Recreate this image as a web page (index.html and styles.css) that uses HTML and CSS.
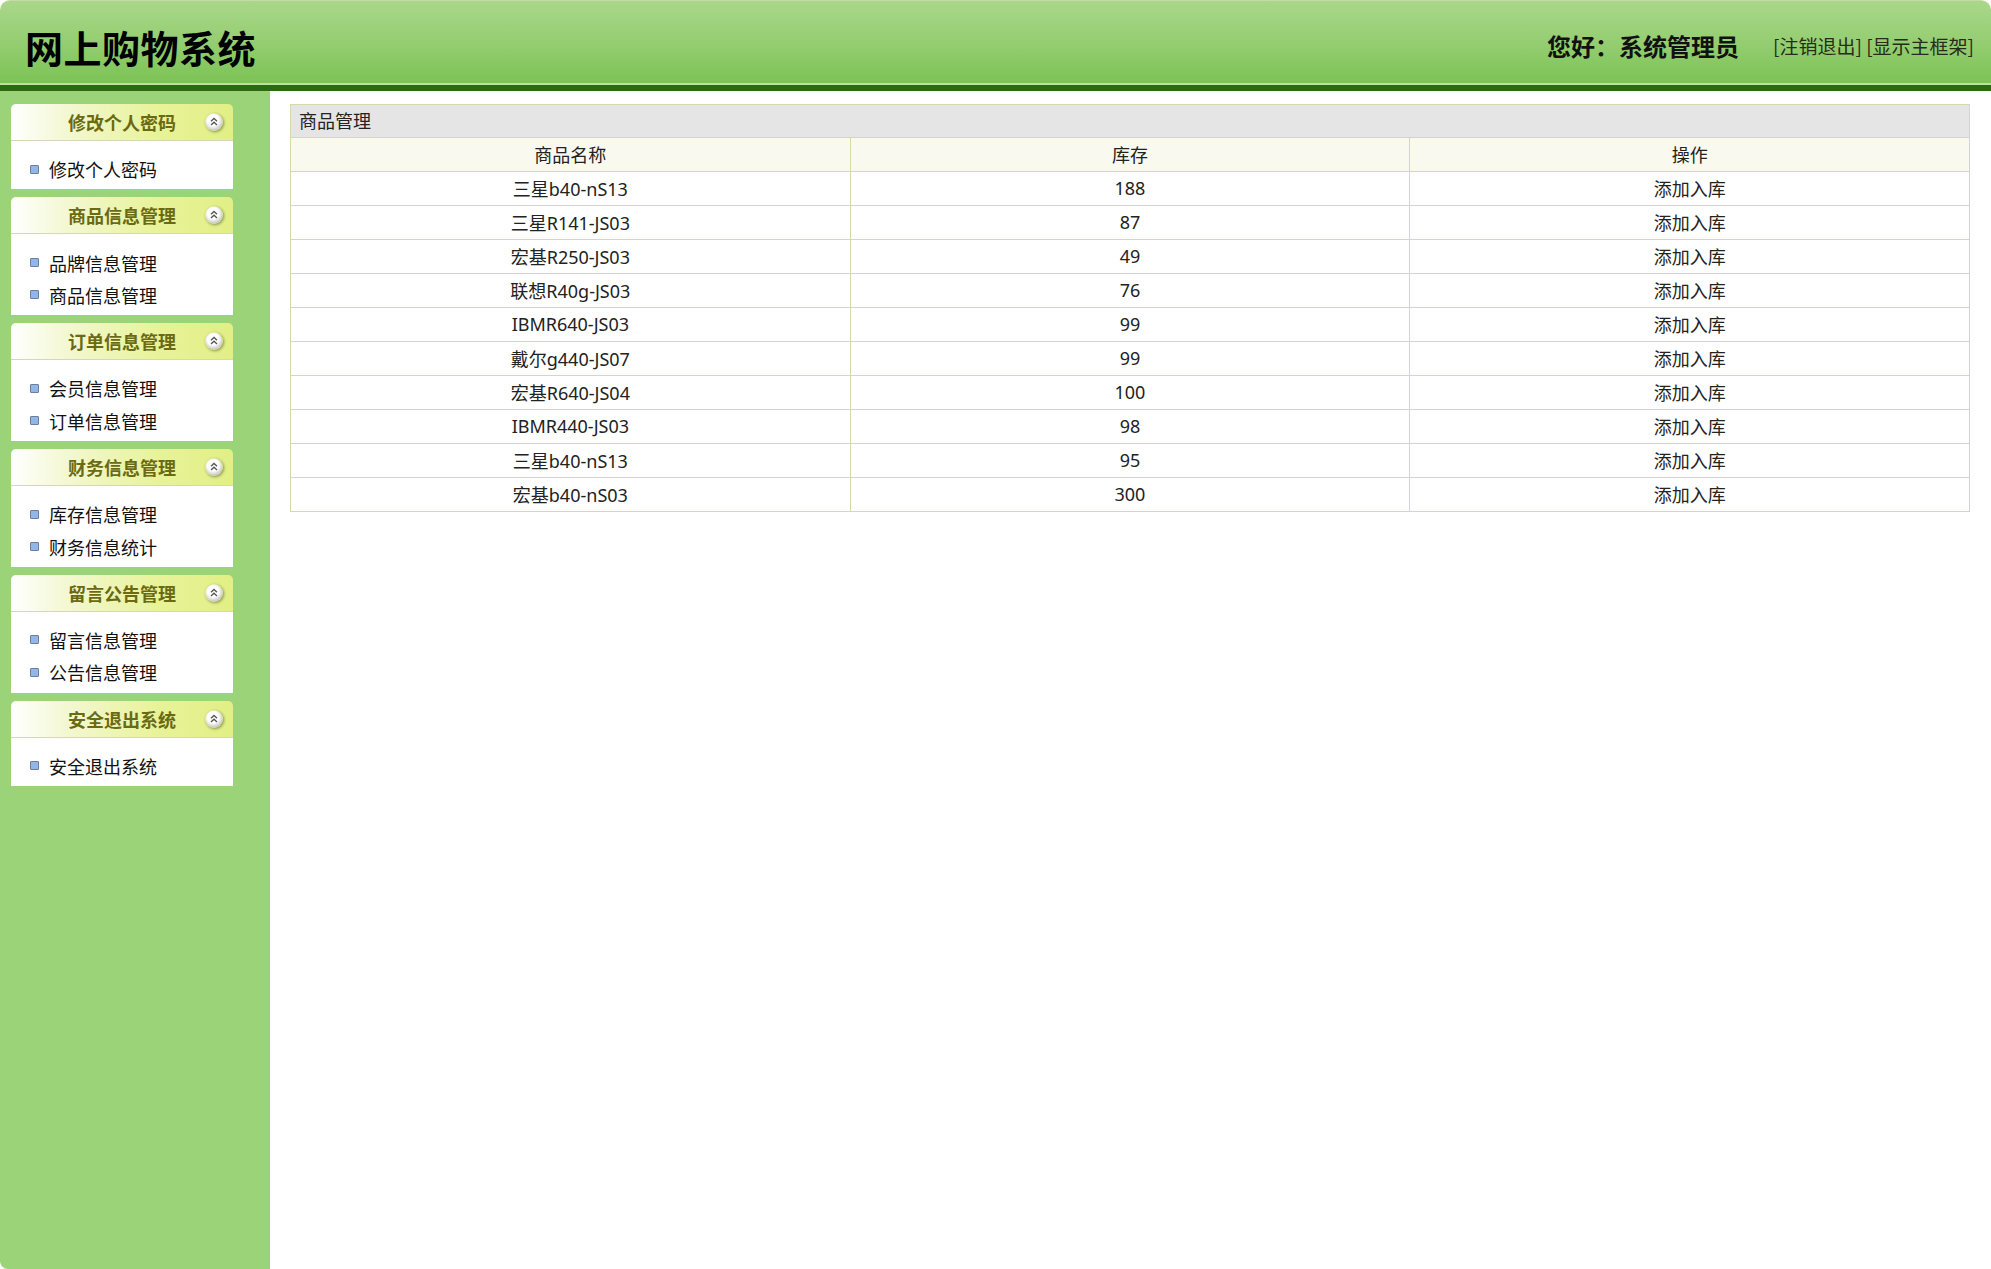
FILE: index.html
```html
<!DOCTYPE html>
<html lang="zh-CN">
<head>
    <meta charset="UTF-8">
    <title>网上购物系统</title>
    <link rel="stylesheet" href="styles.css">
</head>
<body>
    <div class="top">
        <div class="top-bar">
            <h1>网上购物系统</h1>
            <div class="top-user">
                <span class="hello">您好：系统管理员</span>
                <span class="top-links"><a href="#">[注销退出]</a> <a href="#">[显示主框架]</a></span>
            </div>
        </div>
        <div class="top-line"></div>
    </div>

    <div class="wrap">
        <div class="side">
            <div class="box">
                <div class="box-hd"><span class="box-title">修改个人密码</span><span class="fold"><svg viewBox="0 0 18 18" width="18" height="18"><circle cx="9" cy="9" r="8.5" fill="url(#g)"/><path d="M6 8.2 9 5.4 12 8.2M6 12 9 9.2 12 12" fill="none" stroke="#555" stroke-width="1.3"/></svg></span></div>
                <ul class="box-bd">
                    <li>修改个人密码</li>
                </ul>
            </div>
            <div class="box">
                <div class="box-hd"><span class="box-title">商品信息管理</span><span class="fold"><svg viewBox="0 0 18 18" width="18" height="18"><circle cx="9" cy="9" r="8.5" fill="url(#g)"/><path d="M6 8.2 9 5.4 12 8.2M6 12 9 9.2 12 12" fill="none" stroke="#555" stroke-width="1.3"/></svg></span></div>
                <ul class="box-bd">
                    <li>品牌信息管理</li>
                    <li>商品信息管理</li>
                </ul>
            </div>
            <div class="box">
                <div class="box-hd"><span class="box-title">订单信息管理</span><span class="fold"><svg viewBox="0 0 18 18" width="18" height="18"><circle cx="9" cy="9" r="8.5" fill="url(#g)"/><path d="M6 8.2 9 5.4 12 8.2M6 12 9 9.2 12 12" fill="none" stroke="#555" stroke-width="1.3"/></svg></span></div>
                <ul class="box-bd">
                    <li>会员信息管理</li>
                    <li>订单信息管理</li>
                </ul>
            </div>
            <div class="box">
                <div class="box-hd"><span class="box-title">财务信息管理</span><span class="fold"><svg viewBox="0 0 18 18" width="18" height="18"><circle cx="9" cy="9" r="8.5" fill="url(#g)"/><path d="M6 8.2 9 5.4 12 8.2M6 12 9 9.2 12 12" fill="none" stroke="#555" stroke-width="1.3"/></svg></span></div>
                <ul class="box-bd">
                    <li>库存信息管理</li>
                    <li>财务信息统计</li>
                </ul>
            </div>
            <div class="box">
                <div class="box-hd"><span class="box-title">留言公告管理</span><span class="fold"><svg viewBox="0 0 18 18" width="18" height="18"><circle cx="9" cy="9" r="8.5" fill="url(#g)"/><path d="M6 8.2 9 5.4 12 8.2M6 12 9 9.2 12 12" fill="none" stroke="#555" stroke-width="1.3"/></svg></span></div>
                <ul class="box-bd">
                    <li>留言信息管理</li>
                    <li>公告信息管理</li>
                </ul>
            </div>
            <div class="box">
                <div class="box-hd"><span class="box-title">安全退出系统</span><span class="fold"><svg viewBox="0 0 18 18" width="18" height="18"><circle cx="9" cy="9" r="8.5" fill="url(#g)"/><path d="M6 8.2 9 5.4 12 8.2M6 12 9 9.2 12 12" fill="none" stroke="#555" stroke-width="1.3"/></svg></span></div>
                <ul class="box-bd">
                    <li>安全退出系统</li>
                </ul>
            </div>
            <svg width="0" height="0" class="defs">
                <defs>
                    <radialGradient id="g" cx="45%" cy="40%" r="60%">
                        <stop offset="0.55" stop-color="#ffffff"/>
                        <stop offset="1" stop-color="#c4c4c4"/>
                    </radialGradient>
                </defs>
            </svg>
        </div>

        <div class="main">
            <table class="grid">
                <tr><td class="grid-title" colspan="3">商品管理</td></tr>
                <tr><th>商品名称</th><th>库存</th><th>操作</th></tr>
                <tr><td>三星b40-nS13</td><td>188</td><td>添加入库</td></tr>
                <tr><td>三星R141-JS03</td><td>87</td><td>添加入库</td></tr>
                <tr><td>宏基R250-JS03</td><td>49</td><td>添加入库</td></tr>
                <tr><td>联想R40g-JS03</td><td>76</td><td>添加入库</td></tr>
                <tr><td>IBMR640-JS03</td><td>99</td><td>添加入库</td></tr>
                <tr><td>戴尔g440-JS07</td><td>99</td><td>添加入库</td></tr>
                <tr><td>宏基R640-JS04</td><td>100</td><td>添加入库</td></tr>
                <tr><td>IBMR440-JS03</td><td>98</td><td>添加入库</td></tr>
                <tr><td>三星b40-nS13</td><td>95</td><td>添加入库</td></tr>
                <tr><td>宏基b40-nS03</td><td>300</td><td>添加入库</td></tr>
            </table>
        </div>
    </div>
</body>
</html>
```

FILE: styles.css
```css
* {
    margin: 0;
    padding: 0;
    box-sizing: border-box;
}

body {
    font-family: "Noto Sans", "Noto Sans CJK SC", sans-serif;
    color: #222;
    background: #fff;
}

a {
    color: #222;
    text-decoration: none;
}

/* 顶部 */
.top-bar {
    height: 83px;
    display: flex;
    align-items: center;
    justify-content: space-between;
    padding: 0 17px 0 25px;
    background: linear-gradient(#a9d78a 0%, #97cf74 45%, #7cc355 100%);
    border-top: 1px solid #c9d9a6;
    border-radius: 10px 10px 0 0;
}

.top-bar h1 {
    font-family: "Noto Sans CJK SC", sans-serif;
    font-size: 38px;
    font-weight: 700;
    color: #000;
    letter-spacing: 0.5px;
    margin-top: 8px;
}

.top-user {
    display: flex;
    align-items: center;
    gap: 34px;
    margin-top: 7px;
}

.hello {
    font-family: "Noto Sans CJK SC", sans-serif;
    font-size: 24px;
    font-weight: 700;
    color: #111;
}

.top-links {
    font-family: "Noto Sans CJK SC", sans-serif;
    font-size: 19px;
    word-spacing: 0;
}

.top-links a {
    color: #2a2a1a;
}

.top-line {
    height: 8px;
    border-top: 2px solid #b9e39c;
    background: #2b6a13;
}

/* 主体 */
.wrap {
    display: flex;
    min-height: calc(100vh - 91px);
}

.side {
    width: 270px;
    flex-shrink: 0;
    background: #9bd378;
    padding: 13px 0 0 11px;
    border-bottom-left-radius: 8px;
}

.box {
    width: 222px;
    margin-bottom: 8px;
}

.box-hd {
    height: 37px;
    display: grid;
    grid-template-columns: 1fr auto 1fr;
    align-items: center;
    padding-right: 10px;
    border-radius: 5px 5px 0 0;
    border-bottom: 1px solid #d6d6b8;
    background: linear-gradient(to right, #ffffff 0%, #f3f8d2 25%, #e8f39a 65%, #e2ef85 100%);
}

.box-title {
    grid-column: 2;
    font-family: "Noto Sans CJK SC", sans-serif;
    font-size: 18px;
    font-weight: 700;
    color: #6b6a12;
    padding-left: 10px;
}

.fold {
    grid-column: 3;
    justify-self: end;
    display: flex;
    width: 18px;
    height: 18px;
    border-radius: 50%;
    box-shadow: 1px 1px 3px rgba(0, 0, 0, 0.4);
}

.defs {
    position: absolute;
}

.box-bd {
    list-style: none;
    background: #fff;
    padding: 12px 0 4px 19px;
}

.box-bd li {
    display: flex;
    align-items: center;
    gap: 10px;
    height: 32.4px;
    font-size: 18px;
    color: #111;
}

.box-bd li::before {
    content: "";
    width: 7px;
    height: 7px;
    border: 1px solid #6d7f98;
    border-radius: 1px;
    background: #93b6ea;
}

.main {
    flex: 1;
    padding: 13px 21px 0 20px;
}

/* 表格 */
.grid {
    width: 100%;
    border-collapse: collapse;
    table-layout: fixed;
    font-size: 18px;
}

.grid td,
.grid th {
    height: 34px;
    padding-bottom: 2px;
    border: 1px solid #d6d9ac;
    text-align: center;
    font-weight: normal;
    color: #222;
}

.grid th {
    background: #f9f9ef;
}

.grid td.grid-title {
    height: 33px;
    text-align: left;
    padding-left: 8px;
    background: #e5e5e5;
}
```
